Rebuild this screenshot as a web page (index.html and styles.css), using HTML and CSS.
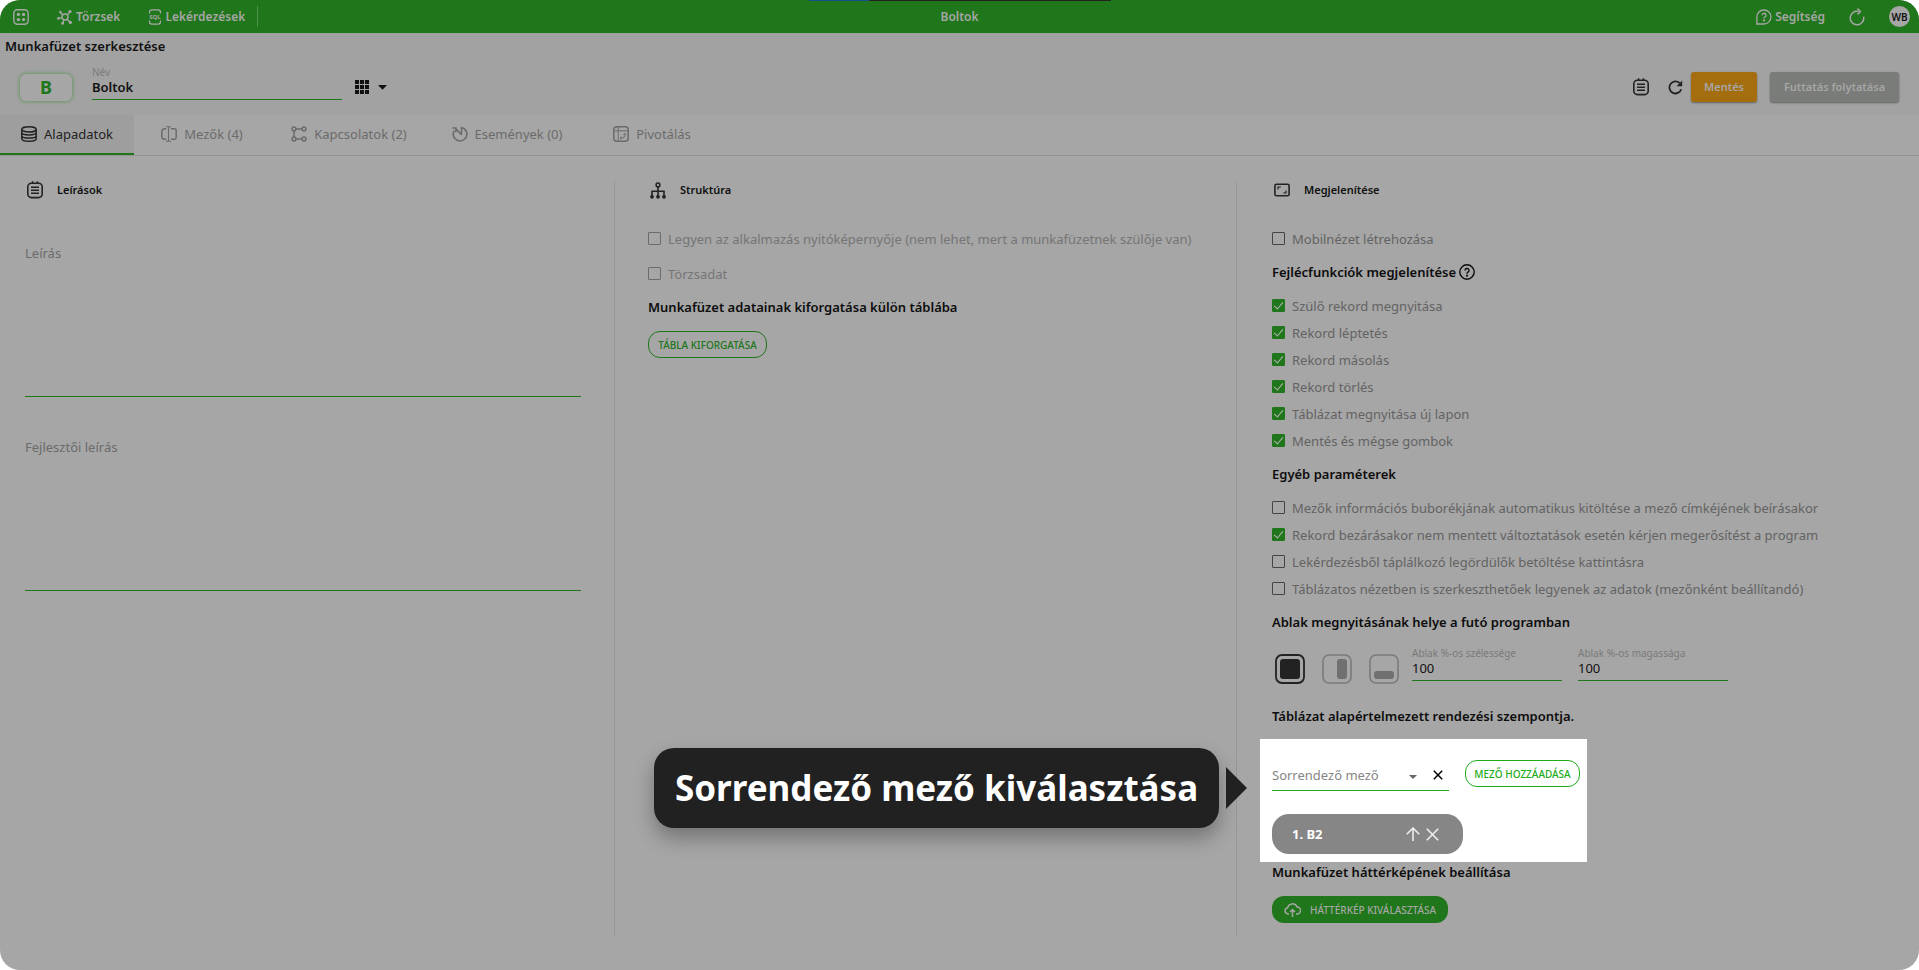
FILE: index.html
```html
<!DOCTYPE html>
<html lang="hu">
<head>
<meta charset="utf-8">
<title>Boltok</title>
<link rel="stylesheet" href="styles.css">
</head>
<body>
<div class="app">
  <header class="topbar">
    <nav class="topnav">
      <button class="bar-btn" aria-label="Alkalmazások">
        <svg width="16" height="16" viewBox="0 0 16 16" fill="none" stroke="currentColor" stroke-width="1.4"><rect x=".8" y=".8" width="14.4" height="14.4" rx="3.6"/><g fill="currentColor" stroke="none"><circle cx="5.4" cy="5.4" r="1.7"/><circle cx="10.6" cy="5.4" r="1.7"/><circle cx="5.4" cy="10.6" r="1.7"/><circle cx="10.6" cy="10.6" r="1.7"/></g></svg>
      </button>
      <a class="bar-link" href="#">
        <svg width="16" height="16" viewBox="0 0 16 16" fill="none" stroke="currentColor" stroke-width="1.4"><circle cx="8" cy="8" r="3"/><path d="M5.8 5.8 3 3.4M10.2 5.8 13 3M6.8 10.6 6 14M10.2 10.2l2.6 2.8M5 8.6 2 9.4"/><g fill="currentColor" stroke="none"><circle cx="3.4" cy="3" r="1.3"/><circle cx="13" cy="2.6" r="1.6"/><circle cx="5.6" cy="14.4" r="1.4"/><circle cx="13.4" cy="13.4" r="1.6"/><circle cx="1.500" cy="9.4" r="1.4"/></g></svg>
        <span>Törzsek</span>
      </a>
      <a class="bar-link" href="#">
        <svg width="14" height="16" viewBox="0 0 14 16" fill="none" stroke="currentColor" stroke-width="1.3"><path d="M1.5 4.5V3.2A2.4 2.4 0 0 1 3.9.8h6.2a2.4 2.4 0 0 1 2.4 2.4v1.3M1.5 11.5v1.3a2.4 2.4 0 0 0 2.4 2.4h6.2a2.4 2.4 0 0 0 2.4-2.4v-1.3"/><text class="sql" x="7" y="10.2" text-anchor="middle" fill="currentColor" stroke="none">SQL</text></svg>
        <span>Lekérdezések</span>
      </a>
    </nav>
    <h1 class="bar-title">Boltok</h1>
    <div class="bar-right">
      <a class="bar-link help" href="#">
        <svg width="16" height="16" viewBox="0 0 16 16" fill="none" stroke="currentColor" stroke-width="1.3"><path d="M.9 15V8A7 7 0 1 1 8 15z"/><path d="M6 6.2a2 2 0 1 1 2.8 1.9c-.6.3-.8.6-.8 1.3"/><circle cx="8" cy="11.4" r=".5" fill="currentColor"/></svg>
        <span>Segítség</span>
      </a>
      <button class="bar-btn" aria-label="Frissítés">
        <svg width="16" height="18" viewBox="0 0 16 18" fill="none" stroke="currentColor" stroke-width="1.5"><path d="M14.6 8.6A6.8 6.8 0 1 1 9.5 3.4"/><path d="M8.4.6 11.4 3.6 8.6 6.4"/></svg>
      </button>
      <span class="avatar">WB</span>
    </div>
    <div class="notch"></div>
  </header>

  <section class="workbook">
    <h2 class="page-title">Munkafüzet szerkesztése</h2>
    <div class="workbook-row">
      <span class="badge">B</span>
      <div class="field name-field">
        <label for="name">Név</label>
        <input id="name" type="text" value="Boltok">
      </div>
      <button class="view-btn" aria-label="Nézet">
        <svg width="14" height="14" viewBox="0 0 14 14" fill="currentColor"><path d="M0 0h4v4H0zM5 0h4v4H5zM10 0h4v4h-4zM0 5h4v4H0zM5 5h4v4H5zM10 5h4v4h-4zM0 10h4v4H0zM5 10h4v4H5zM10 10h4v4h-4z"/></svg>
        <svg width="9" height="5" viewBox="0 0 9 5" fill="currentColor"><path d="M0 0h9L4.5 4.8z"/></svg>
      </button>
      <div class="actions">
        <button class="icon-btn" aria-label="Jegyzet">
          <svg class="note" width="16" height="18" viewBox="0 0 16 18"><use href="#note-shape"/></svg>
        </button>
        <button class="icon-btn" aria-label="Újratöltés">
          <svg width="15" height="15" viewBox="0 0 15 15" fill="none" stroke="currentColor" stroke-width="1.8"><path d="M13.2 9.2A6 6 0 1 1 11.6 3.1"/><path d="M14.2.6v5.6H8.6z" fill="currentColor" stroke="none"/></svg>
        </button>
        <button class="btn save">Mentés</button>
        <button class="btn run" disabled>Futtatás folytatása</button>
      </div>
    </div>
  </section>

  <nav class="tabs">
    <a class="tab tab-base active" href="#">
      <svg width="16" height="16" viewBox="0 0 16 16" fill="none" stroke="currentColor" stroke-width="1.5"><ellipse cx="8" cy="3.400" rx="7.200" ry="2.600"/><path d="M.8 3.4v9c0 1.700 2.400 2.800 7.200 2.800s7.200-1.100 7.200-2.800v-9M.8 6.600c0 1.500 2.400 2.400 7.200 2.400s7.200-.9 7.200-2.400M.8 9.700c0 1.500 2.400 2.400 7.200 2.400s7.200-.9 7.200-2.400"/></svg>
      Alapadatok</a>
    <a class="tab tab-fields" href="#">
      <svg width="16" height="16" viewBox="0 0 16 16" fill="none" stroke="currentColor" stroke-width="1.5"><path d="M5.2 2.700H3.500A2.700 2.700 0 0 0 .8 5.400v5.200a2.700 2.700 0 0 0 2.700 2.700h1.700M10 2.700h3.500a1.700 1.700 0 0 1 1.700 1.700v7.200a1.700 1.700 0 0 1-1.700 1.700H10"/><path d="M7.500.7v14.600M5 .7h5M5 15.300h5" stroke-width="1.100"/></svg>
      Mezők (4)</a>
    <a class="tab tab-links" href="#">
      <svg width="16" height="16" viewBox="0 0 16 16" fill="none" stroke="currentColor" stroke-width="1.5"><circle cx="3" cy="3" r="1.900"/><circle cx="13" cy="3" r="1.900"/><circle cx="3" cy="13" r="1.900"/><circle cx="13" cy="13" r="1.900"/><path d="M5 3h6M3 5v6M5 13h6"/></svg>
      Kapcsolatok (2)</a>
    <a class="tab tab-events" href="#">
      <svg width="16" height="16" viewBox="0 0 16 16" fill="none" stroke="currentColor" stroke-width="1.600"><path d="M9.500 8.800V1.500A6.800 6.800 0 1 1 2.200 4.700"/><path d="M9.300 8.800 3.600 2.200M3.900 6.200V2H.4"/></svg>
      Események (0)</a>
    <a class="tab tab-pivot" href="#">
      <svg width="16" height="16" viewBox="0 0 16 16" fill="none" stroke="currentColor" stroke-width="1.5"><rect x=".8" y=".8" width="14.400" height="14.400" rx="3"/><path d="M5.200 1v14M1 4.800h14" stroke-width="1"/><path d="M7.300 12h1.800A2.700 2.700 0 0 0 11.800 9.300V7.700M8.500 10.500 7 12l1.500 1.400M10.400 8.900l1.400-1.500 1.400 1.500" stroke-width="1"/></svg>
      Pivotálás</a>
  </nav>

  <main class="columns">
    <section class="col descriptions">
      <h3 class="col-head">
        <svg class="note" width="16" height="18" viewBox="0 0 16 18"><g id="note-shape" fill="none" stroke="currentColor" stroke-width="1.600"><rect x=".8" y="2.200" width="14.400" height="14.400" rx="3.600"/><path d="M5.600.3v2M10.400.3v2M4 6.300h8M4 9.300h8M4 12.300h8"/></g></svg>
        Leírások</h3>
      <div class="area-field">
        <label for="desc">Leírás</label>
        <textarea id="desc"></textarea>
      </div>
      <div class="area-field">
        <label for="devdesc">Fejlesztői leírás</label>
        <textarea id="devdesc"></textarea>
      </div>
    </section>

    <section class="col structure">
      <h3 class="col-head">
        <svg width="16" height="17" viewBox="0 0 16 17" fill="none" stroke="currentColor" stroke-width="1.600"><rect x="6.200" y="1" width="3.600" height="3.800" rx="1.400"/><path d="M8 5v9M2 14V9.200h12V14"/><g fill="currentColor" stroke="none"><circle cx="2" cy="14.800" r="1.900"/><circle cx="8" cy="14.800" r="1.900"/><circle cx="14" cy="14.800" r="1.900"/></g></svg>
        Struktúra</h3>
      <div class="checks spaced">
        <label class="check"><input type="checkbox" disabled>Legyen az alkalmazás nyitóképernyője (nem lehet, mert a munkafüzetnek szülője van)</label>
        <label class="check"><input type="checkbox" disabled>Törzsadat</label>
      </div>
      <h4 class="sub">Munkafüzet adatainak kiforgatása külön táblába</h4>
      <button class="pill outline">TÁBLA KIFORGATÁSA</button>
    </section>

    <section class="col display">
      <h3 class="col-head">
        <svg width="16" height="14" viewBox="0 0 16 14" fill="none" stroke="currentColor" stroke-width="1.600"><rect x=".9" y="1.200" width="14.200" height="11.600" rx="1.600"/><path d="M4 6.600V4h2.800M12 7.400V10H9.200" stroke-width="1.200"/></svg>
        Megjelenítése</h3>
      <label class="check"><input type="checkbox">Mobilnézet létrehozása</label>
      <h4 class="sub">Fejlécfunkciók megjelenítése
        <svg width="16" height="16" viewBox="0 0 16 16" fill="none" stroke="currentColor" stroke-width="1.400"><circle cx="8" cy="8" r="7.200"/><path d="M6 6.400a2 2 0 1 1 2.900 1.800c-.7.400-.9.700-.9 1.500"/><circle cx="8" cy="11.700" r=".4" fill="currentColor"/></svg></h4>
      <div class="checks">
        <label class="check"><input type="checkbox" checked>Szülő rekord megnyitása</label>
        <label class="check"><input type="checkbox" checked>Rekord léptetés</label>
        <label class="check"><input type="checkbox" checked>Rekord másolás</label>
        <label class="check"><input type="checkbox" checked>Rekord törlés</label>
        <label class="check"><input type="checkbox" checked>Táblázat megnyitása új lapon</label>
        <label class="check"><input type="checkbox" checked>Mentés és mégse gombok</label>
      </div>
      <h4 class="sub">Egyéb paraméterek</h4>
      <div class="checks">
        <label class="check"><input type="checkbox">Mezők információs buborékjának automatikus kitöltése a mező címkéjének beírásakor</label>
        <label class="check"><input type="checkbox" checked>Rekord bezárásakor nem mentett változtatások esetén kérjen megerősítést a program</label>
        <label class="check"><input type="checkbox">Lekérdezésből táplálkozó legördülők betöltése kattintásra</label>
        <label class="check"><input type="checkbox">Táblázatos nézetben is szerkeszthetőek legyenek az adatok (mezőnként beállítandó)</label>
      </div>
      <h4 class="sub">Ablak megnyitásának helye a futó programban</h4>
      <div class="window-row">
        <div class="placements">
          <button class="place on" aria-label="Teljes"><svg width="30" height="30" viewBox="0 0 30 30"><rect x="1" y="1" width="28" height="28" rx="6" fill="none" stroke="currentColor" stroke-width="1.800"/><rect x="5" y="5" width="20" height="20" rx="3" fill="currentColor"/></svg></button>
          <button class="place" aria-label="Jobb oldal"><svg width="30" height="30" viewBox="0 0 30 30"><rect x="1" y="1" width="28" height="28" rx="6" fill="none" stroke="currentColor" stroke-width="1.600"/><rect class="pane" x="15" y="5" width="10" height="20" rx="3"/></svg></button>
          <button class="place" aria-label="Lent"><svg width="30" height="30" viewBox="0 0 30 30"><rect x="1" y="1" width="28" height="28" rx="6" fill="none" stroke="currentColor" stroke-width="1.600"/><rect class="pane" x="5" y="17" width="20" height="8" rx="3"/></svg></button>
        </div>
        <div class="field size-field"><label for="w">Ablak %-os szélessége</label><input id="w" type="text" value="100"></div>
        <div class="field size-field"><label for="h">Ablak %-os magassága</label><input id="h" type="text" value="100"></div>
      </div>
      <h4 class="sub sort-title">Táblázat alapértelmezett rendezési szempontja.</h4>
      <div class="spotlight">
        <div class="sort-row">
          <div class="combo">
            <input type="text" placeholder="Sorrendező mező" aria-label="Sorrendező mező">
            <svg class="caret" width="8" height="4" viewBox="0 0 8 4" fill="currentColor"><path d="M0 0h8L4 4z"/></svg>
            <button class="clear" aria-label="Törlés"><svg width="10" height="10" viewBox="0 0 10 10" fill="none" stroke="currentColor" stroke-width="1.500"><path d="M.8.8l8.400 8.400M9.200.8.8 9.200"/></svg></button>
          </div>
          <button class="pill outline bright">MEZŐ HOZZÁADÁSA</button>
        </div>
        <div class="chip">
          <span>1. B2</span>
          <button aria-label="Feljebb"><svg width="14" height="14" viewBox="0 0 14 14" fill="none" stroke="currentColor" stroke-width="1.600"><path d="M7 14V1M.8 7.200 7 1l6.200 6.200"/></svg></button>
          <button aria-label="Eltávolítás"><svg width="13" height="13" viewBox="0 0 13 13" fill="none" stroke="currentColor" stroke-width="1.600"><path d="m.8.8 11.400 11.400M12.200.8.8 12.200"/></svg></button>
        </div>
        <div class="callout" role="tooltip">Sorrendező mező kiválasztása</div>
      </div>
      <h4 class="sub map-title">Munkafüzet háttérképének beállítása</h4>
      <button class="pill filled">
        <svg width="17" height="14" viewBox="0 0 17 14" fill="none" stroke="currentColor" stroke-width="1.500"><path d="M5 11H4a3.200 3.200 0 0 1-.4-6.300 5 5 0 0 1 9.500-.7A3.500 3.500 0 0 1 13 11h-1"/><path d="M8.500 14V6.800M6 9l2.500-2.500L11 9"/></svg>
        HÁTTÉRKÉP KIVÁLASZTÁSA</button>
    </section>
  </main>
</div>
</body>
</html>
```
FILE: styles.css
```css
:root {
  --page: #a6a6a6;
  --green: #20761a;
  --green-bright: #20ab19;
  --ink: #111;
  --muted: #6b6b6b;
  --line: #949494;
}
* { box-sizing: border-box; }
body { margin: 0; background: #fff; color: var(--ink); font: 13px/20px "Noto Sans", sans-serif; }
button, input, textarea { font: inherit; color: inherit; }
button { padding: 0; border: 0; background: none; cursor: pointer; }
h1, h2, h3, h4 { margin: 0; font-size: 13px; font-weight: 600; }
a { color: inherit; text-decoration: none; }
svg { display: block; flex: none; }

.app { display: flex; flex-direction: column; min-height: 100vh; background: var(--page); border-radius: 20px; overflow: hidden; }

.topbar { position: relative; display: grid; grid-template-columns: 1fr auto 1fr; align-items: center; height: 33px; background: var(--green); color: #a6a6a6; }
.topnav { display: flex; align-items: center; gap: 28px; width: 258px; height: 21px; padding-left: 13px; border-right: 1px solid #4d914a; }
.bar-link { display: flex; align-items: center; gap: 3px; font-size: 12px; font-weight: 600; }
.sql { font: 700 6px "Noto Sans", sans-serif; }
.bar-title { font-size: 12px; }
.bar-right { display: flex; align-items: center; justify-content: flex-end; gap: 24px; padding-right: 9px; }
.avatar { display: grid; place-items: center; width: 21px; height: 21px; border-radius: 50%; background: #a6a6a6; color: #111; font-size: 10px; font-weight: 600; }
.notch { position: absolute; top: 0; left: 50%; width: 302px; height: 1px; margin-left: -151px; background: linear-gradient(90deg, #14508c 60px, #222 60px); }

.workbook { padding: 3px 20px 7px 5px; background: #a2a2a2; }
.workbook-row { display: flex; align-items: center; padding: 10px 0 0 15px; }
.badge { display: grid; place-items: center; width: 52px; height: 27px; border-radius: 6px; background: #a6a6a6; box-shadow: 0 0 4px #4d914a; color: var(--green); font-size: 18px; font-weight: 700; }
.field { display: flex; flex-direction: column; }
.field label { font-size: 10px; line-height: 12px; color: #7a7a7a; }
.field input { width: 100%; height: 22px; padding: 0 0 4px; border: 0; border-bottom: 1px solid var(--green); background: none; outline: 0; }
.name-field { width: 250px; margin: 0 0 8px 20px; }
.name-field input { font-weight: 600; }
.view-btn { display: flex; align-items: center; gap: 9px; height: 24px; margin-left: 13px; }
.actions { display: flex; align-items: center; margin-left: auto; }
.icon-btn { margin-right: 19px; color: #222; }
.icon-btn + .icon-btn { margin-right: 8px; }
.btn { height: 30px; border-radius: 3px; color: #a6a6a6; font-size: 11px; font-weight: 600; box-shadow: 0 1px 2px rgba(0, 0, 0, .4); }
.save { width: 66px; margin-right: 13px; background: #a46e0e; }
.run { width: 129px; background: #7a7c79; }

.tabs { display: flex; height: 41px; border-bottom: 1px solid var(--line); color: var(--muted); }
.tab { display: flex; align-items: center; justify-content: center; gap: 7px; border-bottom: 2px solid transparent; }
.tab-base { width: 134px; }
.tab-fields { width: 136px; }
.tab-links, .tab-events { width: 158px; }
.tab-pivot { width: 132px; }
.tab.active { background: #9e9e9e; color: #222; border-color: var(--green); }

.columns { flex: 1; display: grid; grid-template-columns: 614fr 622fr 683fr; padding: 25px 0 34px; }
.col { padding: 0 33px; }
.descriptions { padding-left: 25px; }
.col + .col { border-left: 1px solid #979797; }
.col + .display { padding-left: 35px; }
.col-head { display: flex; align-items: center; gap: 14px; height: 18px; margin-bottom: 26px; padding-left: 2px; font-size: 11px; }
.col-head svg { color: #222; }
.area-field { display: flex; flex-direction: column; margin-bottom: 40px; color: var(--muted); }
.col-head + .area-field { margin-top: 44px; }
.area-field textarea { height: 134px; border: 0; border-bottom: 1px solid var(--green); background: none; resize: none; outline: 0; }
.check { display: flex; align-items: center; gap: 7px; height: 27px; color: #636363; white-space: nowrap; }
.spaced { display: grid; gap: 8px; }
.spaced .check { color: #757575; }
.check input { appearance: none; display: grid; place-items: center; flex: none; width: 13px; height: 13px; margin: 0; border: 1px solid #444; border-radius: 1px; }
.check input:disabled { border-color: #6b6b6b; }
.check input:checked { border-color: var(--green); background: var(--green); }
.check input:checked::before { content: ""; width: 4px; height: 8px; margin-bottom: 2px; border: solid #b4b4b4; border-width: 0 1px 1px 0; rotate: 40deg; }
.sub { display: flex; align-items: center; gap: 3px; height: 20px; margin: 10px 0; color: #0d0d0d; }
.pill { display: flex; align-items: center; justify-content: center; height: 27px; border-radius: 12px; font-size: 10px; font-weight: 500; }
.outline { width: 119px; border: 1px solid var(--green); color: var(--green); }
.structure .pill { margin-top: 14px; }
.bright { width: 115px; border-color: var(--green-bright); color: var(--green-bright); }
.filled { gap: 9px; width: 176px; background: var(--green); color: #a6a6a6; }

.window-row { display: flex; align-items: flex-end; height: 42px; margin-bottom: 22px; }
.placements { display: flex; gap: 17px; margin: 0 13px 0 3px; }
.place { color: #7a7a7a; }
.place .pane { fill: #707070; }
.place.on { color: #222; }
.size-field { width: 150px; margin: 0 16px 3px 0; }
.sort-title { margin-bottom: 13px; }
.spotlight { position: relative; width: 327px; margin-left: -12px; padding: 21px 7px 8px 12px; background: #fff; }
.sort-row { display: flex; justify-content: space-between; height: 31px; margin-bottom: 23px; }
.combo { display: flex; align-items: center; width: 177px; border-bottom: 1px solid var(--green-bright); }
.combo input { flex: 1; min-width: 0; padding: 0; border: 0; background: none; outline: 0; }
.combo input::placeholder { color: #868686; opacity: 1; }
.caret { margin: 4px 16px 0 0; color: #666; }
.clear { margin-right: 6px; color: #000; }
.chip { display: flex; align-items: center; gap: 6px; width: 191px; height: 40px; padding: 0 24px 0 20px; border-radius: 17px; background: #868686; color: #eee; }
.chip span { flex: 1; color: #fff; font-weight: 700; }
.callout { position: absolute; top: 9px; right: calc(100% + 41px); display: flex; align-items: center; justify-content: center; width: 565px; height: 80px; border-radius: 20px; background: #212121; color: #fff; font-size: 35px; font-weight: 700; white-space: nowrap; box-shadow: 0 10px 20px rgba(0, 0, 0, .3); }
.callout::after { content: ""; position: absolute; left: calc(100% + 7px); top: 19px; border: 21px solid transparent; border-left-color: #212121; border-right: 0; }
.map-title { margin: 0 0 14px; }
```
